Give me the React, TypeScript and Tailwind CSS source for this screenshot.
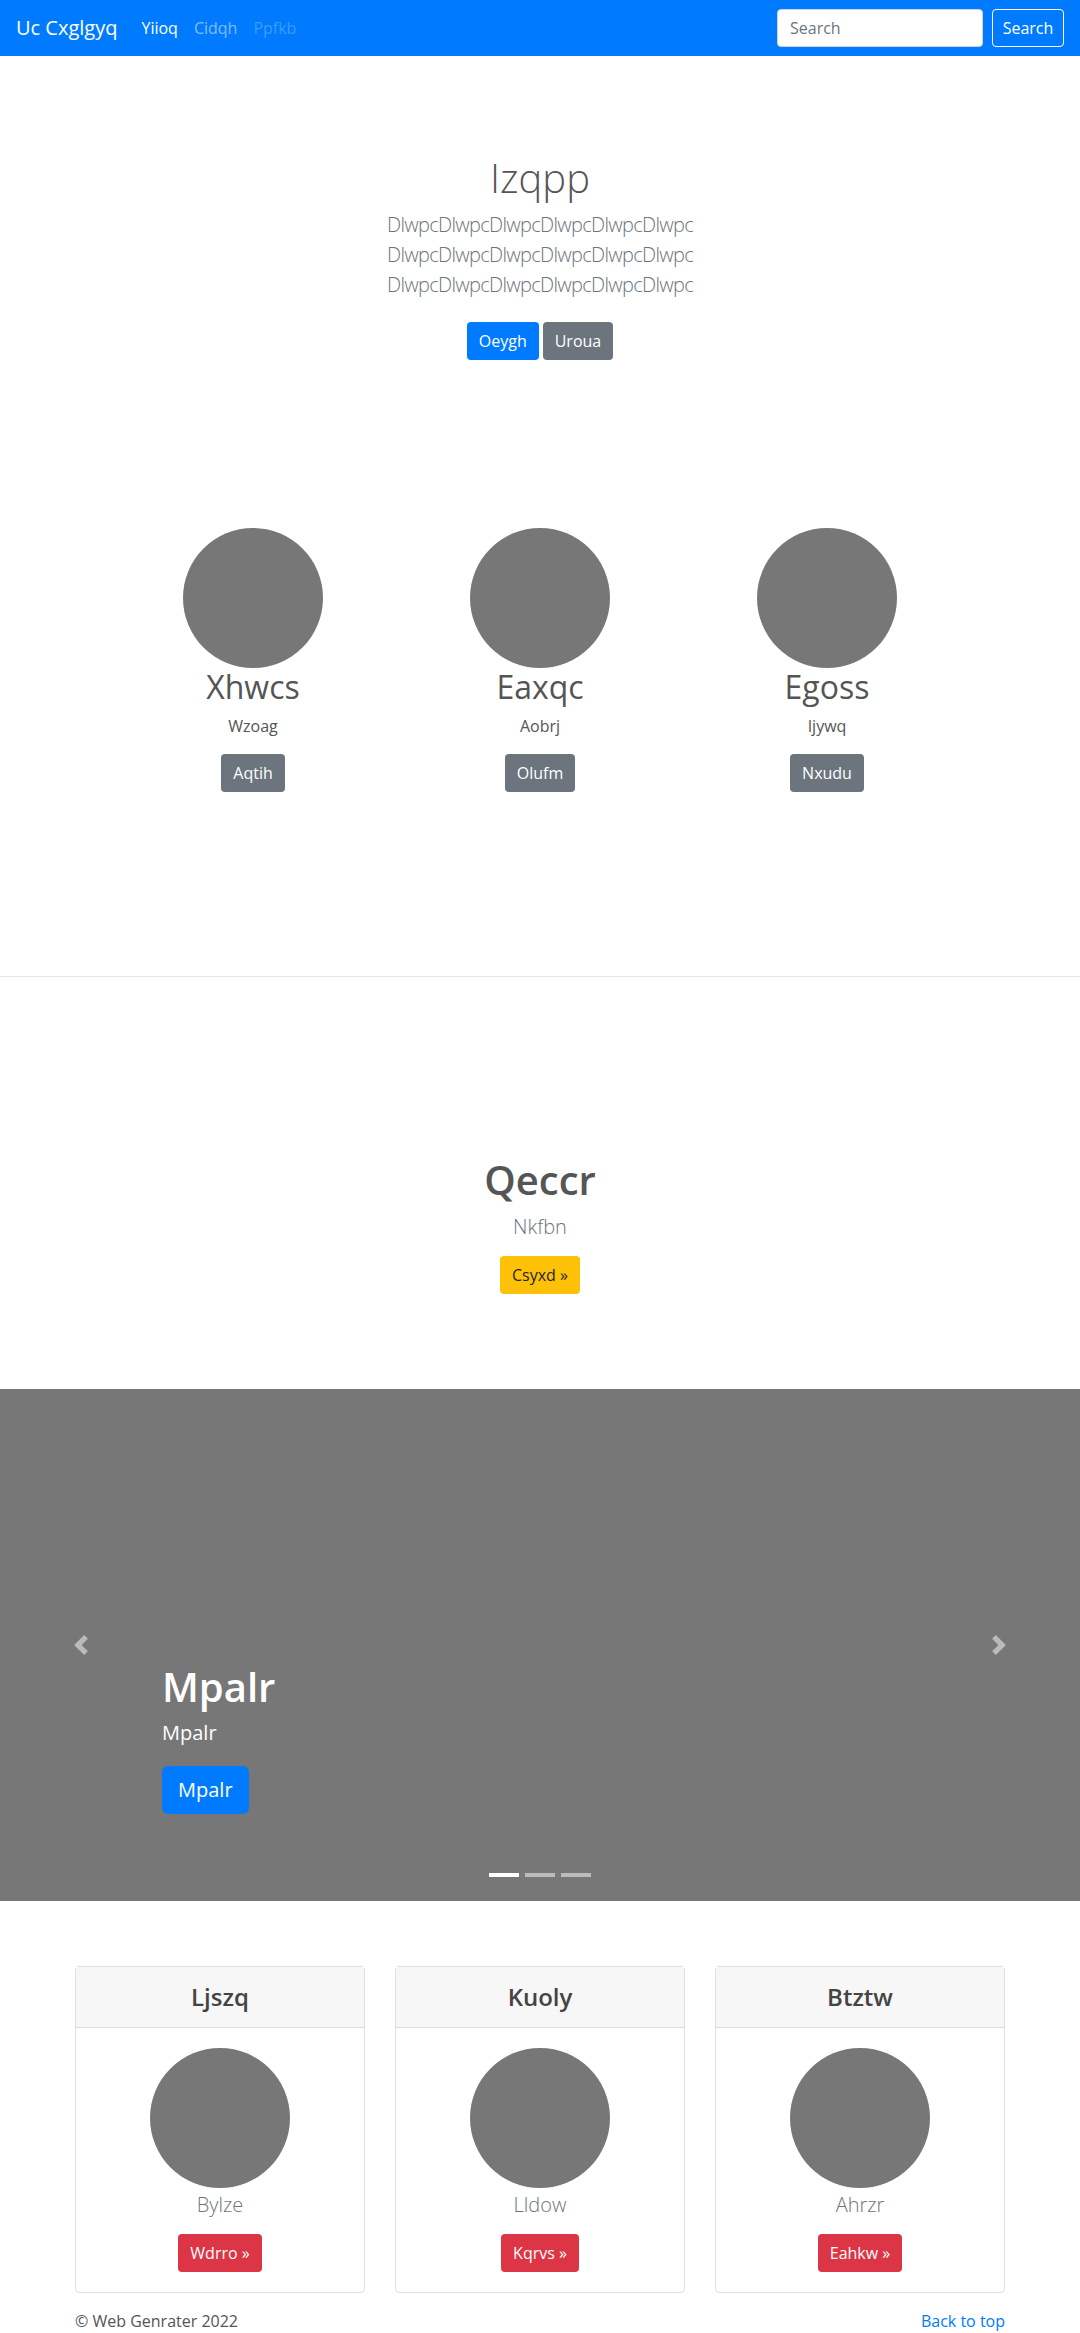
import React from "react";

const font = { fontFamily: '"Open Sans", "Noto Sans", Arial, sans-serif' };

function Navbar() {
  return (
    <nav className="h-[56px] bg-[#007bff] flex items-center px-4">
      <a className="text-white text-[20px] mr-4 leading-[30px]">Uc Cxglgyq</a>
      <div className="flex items-center text-[16px]">
        <a className="px-2 text-white">Yiioq</a>
        <a className="px-2 text-white/50">Cidqh</a>
        <a className="px-2 text-white/25">Ppfkb</a>
      </div>
      <div className="ml-auto flex items-center gap-[9px]">
        <input
          placeholder="Search"
          className="w-[206px] h-[38px] rounded bg-white px-3 text-[16px] text-[#495057] placeholder:text-[#6c757d] border border-[#ced4da] outline-none"
        />
        <button className="h-[38px] w-[72px] rounded border border-white text-white text-[16px]">Search</button>
      </div>
    </nav>
  );
}

function Hero() {
  return (
    <section className="pt-[98px] text-center">
      <h1 className="text-[40px] leading-[48px] font-light text-[#555] mb-2">Izqpp</h1>
      <p className="text-[20px] leading-[30px] font-light tracking-[-0.7px] text-[#6c757d]">
        DlwpcDlwpcDlwpcDlwpcDlwpcDlwpc
        <br />
        DlwpcDlwpcDlwpcDlwpcDlwpcDlwpc
        <br />
        DlwpcDlwpcDlwpcDlwpcDlwpcDlwpc
      </p>
      <div className="flex justify-center gap-1 mt-[22px]">
        <button className="h-[38px] px-3 rounded bg-[#007bff] text-white text-[16px]">Oeygh</button>
        <button className="h-[38px] px-3 rounded bg-[#6c757d] text-white text-[16px]">Uroua</button>
      </div>
    </section>
  );
}

const people = [
  { name: "Xhwcs", sub: "Wzoag", btn: "Aqtih" },
  { name: "Eaxqc", sub: "Aobrj", btn: "Olufm" },
  { name: "Egoss", sub: "Ijywq", btn: "Nxudu" },
];

function Marketing() {
  return (
    <section className="w-[861px] mx-auto grid grid-cols-3 mt-[168px] pb-[184px]">
      {people.map((p) => (
        <div key={p.name} className="flex flex-col items-center text-center">
          <div className="w-[140px] h-[140px] rounded-full bg-[#777]" />
          <h2 className="text-[32px] leading-[38px] text-[#555] mb-2">{p.name}</h2>
          <p className="text-[16px] leading-[24px] text-[#555] mb-4">{p.sub}</p>
          <button className="h-[38px] px-3 rounded bg-[#6c757d] text-white text-[16px]">{p.btn}</button>
        </div>
      ))}
    </section>
  );
}

function Promo() {
  return (
    <section className="pt-[179px] pb-[95px] text-center">
      <h1 className="text-[40px] leading-[48px] font-semibold text-[#555] mb-2">Qeccr</h1>
      <p className="text-[20px] leading-[30px] font-light text-[#6c757d] mb-[14px]">Nkfbn</p>
      <button className="h-[38px] px-3 rounded bg-[#ffc107] text-[#212529] text-[16px]">Csyxd »</button>
    </section>
  );
}

function Chevron({ right }: { right?: boolean }) {
  return (
    <svg width="20" height="20" viewBox="0 0 8 8" className="opacity-50">
      <path
        fill="#fff"
        d={right ? "M2.75 0l-1.5 1.5 2.5 2.5-2.5 2.5 1.5 1.5 4-4-4-4z" : "M5.25 0l-4 4 4 4 1.5-1.5-2.5-2.5 2.5-2.5-1.5-1.5z"}
      />
    </svg>
  );
}

function Carousel() {
  return (
    <section className="relative h-[512px] bg-[#777] flex flex-col justify-end pl-[162px] pb-[87px]">
      <div className="absolute left-0 top-0 h-full w-[162px] flex items-center justify-center">
        <Chevron />
      </div>
      <div className="absolute right-0 top-0 h-full w-[162px] flex items-center justify-center">
        <Chevron right />
      </div>
      <h1 className="text-[40px] leading-[48px] font-semibold text-white mb-2">Mpalr</h1>
      <p className="text-[20px] leading-[28px] text-white mb-[19px]">Mpalr</p>
      <div>
        <button className="h-[48px] px-4 rounded-md bg-[#007bff] text-white text-[20px]">Mpalr</button>
      </div>
      <div className="absolute left-0 right-0 bottom-[24px] flex justify-center gap-[6px]">
        <span className="w-[30px] h-[4px] bg-white" />
        <span className="w-[30px] h-[4px] bg-white/50" />
        <span className="w-[30px] h-[4px] bg-white/50" />
      </div>
    </section>
  );
}

const cards = [
  { title: "Ljszq", sub: "Bylze", btn: "Wdrro »" },
  { title: "Kuoly", sub: "Lldow", btn: "Kqrvs »" },
  { title: "Btztw", sub: "Ahrzr", btn: "Eahkw »" },
];

function Cards() {
  return (
    <section className="w-[930px] mx-auto grid grid-cols-3 gap-[30px] pt-[65px]">
      {cards.map((c) => (
        <div key={c.title} className="border border-[#dfdfdf] rounded text-center">
          <div className="h-[61px] bg-[#f7f7f7] border-b border-[#dfdfdf] flex items-center justify-center">
            <h4 className="text-[24px] font-semibold text-[#444]">{c.title}</h4>
          </div>
          <div className="flex flex-col items-center pt-5 pb-5">
            <div className="w-[140px] h-[140px] rounded-full bg-[#777]" />
            <p className="text-[20px] leading-[30px] font-light text-[#6c757d] mt-[2px] mb-[14px]">{c.sub}</p>
            <button className="h-[38px] px-3 rounded bg-[#dc3545] text-white text-[16px]">{c.btn}</button>
          </div>
        </div>
      ))}
    </section>
  );
}

function Footer() {
  return (
    <footer className="w-[930px] mx-auto flex justify-between pt-4 text-[16px] leading-[24px]">
      <p className="text-[#555]">© Web Genrater 2022</p>
      <a className="text-[#007bff]">Back to top</a>
    </footer>
  );
}

export default function App() {
  return (
    <div className="bg-white min-h-[2333px]" style={font}>
      <Navbar />
      <Hero />
      <Marketing />
      <hr className="border-0 border-t border-[#e5e5e5]" />
      <Promo />
      <Carousel />
      <Cards />
      <Footer />
    </div>
  );
}
